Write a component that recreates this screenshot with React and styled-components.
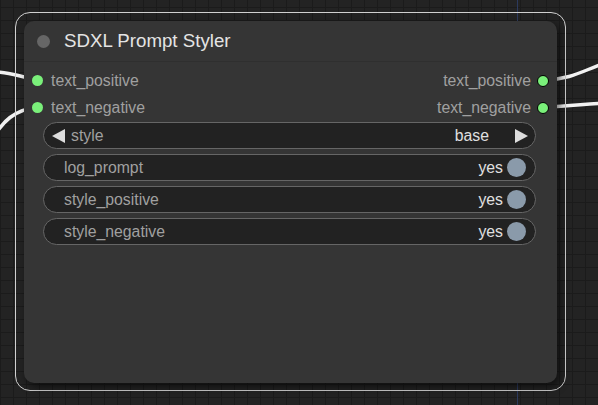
import React from 'react'
import styled, { createGlobalStyle } from 'styled-components'

const Global = createGlobalStyle`
  html, body {
    margin: 0;
    padding: 0;
    background: #222;
  }
  * { box-sizing: border-box; }
`

const Canvas = styled.div`
  position: relative;
  width: 598px;
  height: 405px;
  overflow: hidden;
  background-color: #232323;
  background-image:
    linear-gradient(to right, #1b1b1b 1px, transparent 1px),
    linear-gradient(to bottom, #1b1b1b 1px, transparent 1px);
  background-size: 13px 13px;
  background-position: 0px 7px;
  font-family: "Liberation Sans", Arial, sans-serif;
`

const Wires = styled.svg`
  position: absolute;
  left: 0;
  top: 0;
`

const Selection = styled.div`
  position: absolute;
  left: 15px;
  top: 12px;
  width: 551px;
  height: 379px;
  border: 1.5px solid #d0d0d0;
  border-radius: 15px;
`

const Node = styled.div`
  position: absolute;
  left: 24px;
  top: 21px;
  width: 533px;
  height: 362px;
  background: #353535;
  border-radius: 10px;
  box-shadow: 3px 4px 8px rgba(0, 0, 0, 0.55);
  display: flex;
  flex-direction: column;
`

const Title = styled.div`
  height: 41px;
  display: flex;
  align-items: center;
  padding-left: 13px;
  gap: 14px;
  border-bottom: 1px solid #2f2f2f;
  color: #e4e4e4;
  font-size: 18.7px;
`

const TitleDot = styled.span`
  width: 13px;
  height: 13px;
  border-radius: 50%;
  background: #666;
`

const Slots = styled.div`
  padding-top: 5px;
  display: flex;
  flex-direction: column;
`

const SlotRow = styled.div`
  height: 27px;
  display: flex;
  align-items: center;
  justify-content: space-between;
  font-size: 15.8px;
  color: #a0a0a0;
`

const Slot = styled.div`
  display: flex;
  align-items: center;
  gap: ${p => (p.$out ? '6px' : '8px')};
  flex-direction: ${p => (p.$out ? 'row-reverse' : 'row')};
  padding: ${p => (p.$out ? '0 8px 0 0' : '0 0 0 8px')};
`

const Dot = styled.span`
  width: ${p => (p.$out ? '12px' : '11px')};
  height: ${p => (p.$out ? '12px' : '11px')};
  border-radius: 50%;
  background: #7af07a;
  border: ${p => (p.$out ? '1.5px solid #000' : 'none')};
`

const Widgets = styled.div`
  margin-top: 1px;
  padding: 0 21px 0 19px;
  display: flex;
  flex-direction: column;
  gap: 5px;
`

const Widget = styled.div`
  height: 27px;
  border: 1px solid #666;
  border-radius: 14px;
  background: #222;
  display: flex;
  align-items: center;
  font-size: 15.8px;
  padding: ${p => (p.$combo ? '0 7px 0 8px' : '0 9px 0 20px')};
`

const Label = styled.span`
  color: #a0a0a0;
  flex: 1;
  margin-left: ${p => (p.$combo ? '5px' : '0')};
`

const Value = styled.span`
  color: #e0e0e0;
  margin-right: ${p => (p.$combo ? '25px' : '4px')};
`

const Knob = styled.span`
  width: 19px;
  height: 19px;
  border-radius: 50%;
  background: #8a9aaa;
`

const Arrow = ({ dir }) => (
  <svg width="14" height="14" viewBox="0 0 14 14">
    {dir === 'left'
      ? <polygon points="13,0 13,14 0,7" fill="#ddd" />
      : <polygon points="1,0 1,14 14,7" fill="#ddd" />}
  </svg>
)

const toggles = ['log_prompt', 'style_positive', 'style_negative']

const App = () => {
  return (
    <>
      <Global />
      <Canvas>
        <Wires width="598" height="405">
          <line x1="517.5" y1="0" x2="517.5" y2="405" stroke="#2c3a5e" strokeWidth="1" />
          <path d="M -5 72 C 10 72, 20 77, 40 80" stroke="#f2f2f2" strokeWidth="3.5" fill="none" />
          <path d="M -8 140 C 2 122, 14 109, 40 107" stroke="#f2f2f2" strokeWidth="3.5" fill="none" />
          <path d="M 545 80 C 572 79, 582 71, 605 63" stroke="#f2f2f2" strokeWidth="3.5" fill="none" />
          <path d="M 545 107 C 570 106, 585 104, 605 103" stroke="#f2f2f2" strokeWidth="3.5" fill="none" />
        </Wires>
        <Selection />
        <Node>
          <Title>
            <TitleDot />
            SDXL Prompt Styler
          </Title>
          <Slots>
            <SlotRow>
              <Slot><Dot />text_positive</Slot>
              <Slot $out><Dot $out />text_positive</Slot>
            </SlotRow>
            <SlotRow>
              <Slot><Dot />text_negative</Slot>
              <Slot $out><Dot $out />text_negative</Slot>
            </SlotRow>
          </Slots>
          <Widgets>
            <Widget $combo>
              <Arrow dir="left" />
              <Label $combo>style</Label>
              <Value $combo>base</Value>
              <Arrow dir="right" />
            </Widget>
            {toggles.map(t => (
              <Widget key={t}>
                <Label>{t}</Label>
                <Value>yes</Value>
                <Knob />
              </Widget>
            ))}
          </Widgets>
        </Node>
      </Canvas>
    </>
  )
}

export default App
